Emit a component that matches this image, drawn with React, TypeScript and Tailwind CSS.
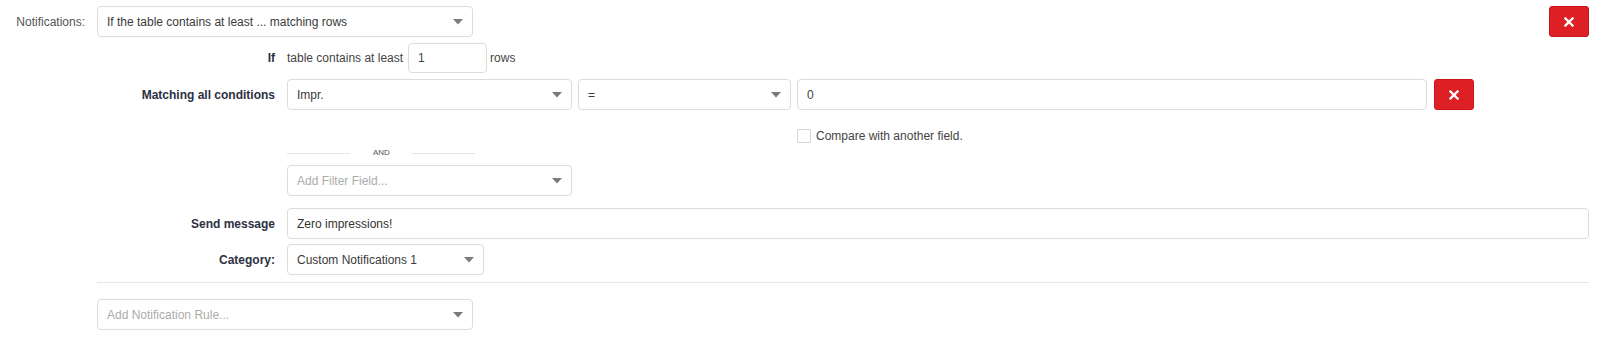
import React from "react";

const Arrow = () => (
  <svg width="10" height="6" viewBox="0 0 10 6" className="shrink-0">
    <path d="M0 0 L10 0 L5 5.5 Z" fill="#7a7a7a" />
  </svg>
);

const Select = ({ text, placeholder, w }: { text: string; placeholder?: boolean; w: string }) => (
  <div
    className={`${w} h-[31px] shrink-0 flex items-center justify-between pl-[9px] pr-[9px] border border-[#dcdcdc] rounded-[4px] bg-white`}
  >
    <span className={placeholder ? "text-[#ababab]" : "text-[#3a3a3a]"}>{text}</span>
    <Arrow />
  </div>
);

const XBtn = () => (
  <div className="w-[40px] h-[31px] shrink-0 flex items-center justify-center rounded-[3px] bg-[#dd1f26] border border-[#c8161d]">
    <svg width="10" height="10" viewBox="0 0 10 10">
      <path d="M1.5 1.5 L8.5 8.5 M8.5 1.5 L1.5 8.5" stroke="#fff" strokeWidth="2.3" strokeLinecap="square" />
    </svg>
  </div>
);

const Label = ({ children }: { children: React.ReactNode }) => (
  <div className="w-[178px] shrink-0 text-right font-bold text-[#2b3142]">{children}</div>
);

export default function App() {
  return (
    <div
      className="w-[1600px] h-[340px] bg-white text-[12px] overflow-hidden"
      style={{ fontFamily: '"Liberation Sans", Arial, sans-serif' }}
    >
      <div className="flex pt-[6px]">
        <div className="w-[85px] shrink-0 text-right text-[#555] h-[31px] flex items-center justify-end">
          Notifications:
        </div>
        <div className="ml-[12px] w-[1492px] flex flex-col">
          <div className="flex items-center">
            <Select w="w-[376px]" text="If the table contains at least ... matching rows" />
            <div className="ml-auto">
              <XBtn />
            </div>
          </div>

          <div className="flex items-center mt-[6px] h-[30px] gap-[12px]">
            <Label>If</Label>
            <div className="flex items-center text-[#444]">
              <span>table contains at least</span>
              <div className="ml-[5px] w-[79px] h-[30px] border border-[#dcdcdc] rounded-[4px] flex items-center pl-[9px] text-[#444]">
                1
              </div>
              <span className="ml-[3px]">rows</span>
            </div>
          </div>

          <div className="flex items-center mt-[6px] gap-[12px]">
            <Label>Matching all conditions</Label>
            <div className="flex items-center">
              <Select w="w-[285px]" text="Impr." />
              <div className="ml-[6px]">
                <Select w="w-[213px]" text="=" />
              </div>
              <div className="ml-[6px] w-[630px] h-[31px] border border-[#dcdcdc] rounded-[4px] flex items-center pl-[9px] text-[#444]">
                0
              </div>
              <div className="ml-[7px]">
                <XBtn />
              </div>
            </div>
          </div>

          <div className="flex items-center mt-[19px] h-[14px]">
            <div className="ml-[700px] w-[14px] h-[14px] border border-[#d6d6d6] rounded-[2px] bg-white" />
            <span className="ml-[5px] text-[#444]">Compare with another field.</span>
          </div>

          <div className="flex items-center mt-[5px] h-[10px] ml-[190px]">
            <div className="w-[63px] h-px bg-[#e4e4e4]" />
            <span className="ml-[23px] text-[8px] text-[#555] leading-none">AND</span>
            <div className="ml-[22px] w-[63px] h-px bg-[#e4e4e4]" />
          </div>

          <div className="flex mt-[7px] ml-[190px]">
            <Select w="w-[285px]" text="Add Filter Field..." placeholder />
          </div>

          <div className="flex items-center mt-[12px] gap-[12px]">
            <Label>Send message</Label>
            <div className="w-[1302px] h-[31px] border border-[#dcdcdc] rounded-[4px] flex items-center pl-[9px] text-[#333]">
              Zero impressions!
            </div>
          </div>

          <div className="flex items-center mt-[5px] gap-[12px]">
            <Label>Category:</Label>
            <Select w="w-[197px]" text="Custom Notifications 1" />
          </div>

          <div className="mt-[7px] h-px w-[1492px] bg-[#e6e6e6]" />

          <div className="flex mt-[16px]">
            <Select w="w-[376px]" text="Add Notification Rule..." placeholder />
          </div>
        </div>
      </div>
    </div>
  );
}
